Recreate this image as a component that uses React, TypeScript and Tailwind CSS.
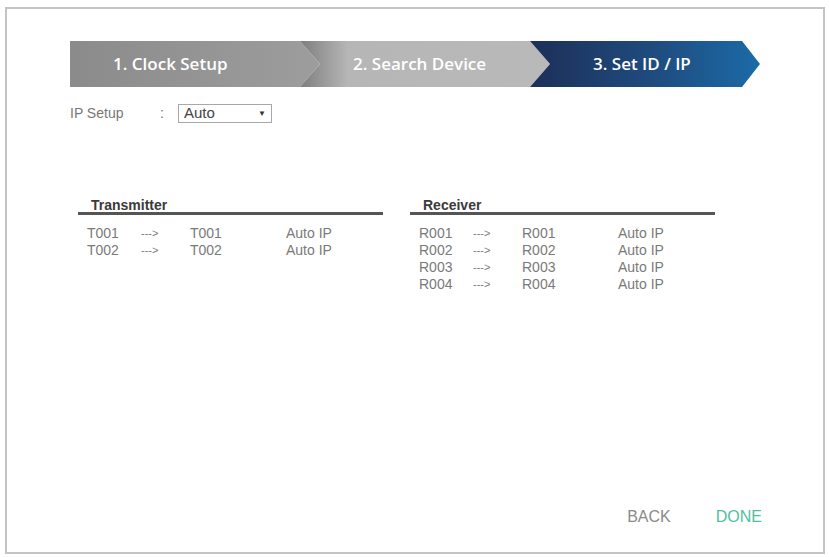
const transmitters = [
  { from: "T001", to: "T001", ip: "Auto IP" },
  { from: "T002", to: "T002", ip: "Auto IP" },
];

const receivers = [
  { from: "R001", to: "R001", ip: "Auto IP" },
  { from: "R002", to: "R002", ip: "Auto IP" },
  { from: "R003", to: "R003", ip: "Auto IP" },
  { from: "R004", to: "R004", ip: "Auto IP" },
];

type Row = { from: string; to: string; ip: string };

function DeviceList({ title, rows }: { title: string; rows: Row[] }) {
  return (
    <div className="w-[305px]">
      <div className="pl-[13px] border-b-[3px] border-[#555] text-[14px] leading-[14px] font-bold text-[#3a3a3a]">
        {title}
      </div>
      <div className="mt-[10px] pl-[9px] text-[14px] leading-[17px] text-[#7a7a7a]">
        {rows.map((r) => (
          <div key={r.from} className="flex">
            <span className="w-[54px]">{r.from}</span>
            <span className="w-[49px] text-[11px]">---&gt;</span>
            <span className="w-[96px]">{r.to}</span>
            <span>{r.ip}</span>
          </div>
        ))}
      </div>
    </div>
  );
}

export default function App() {
  return (
    <div className="pl-[5px] pt-[7px] bg-white font-['Liberation_Sans',Arial,sans-serif]">
      <div className="w-[820px] h-[547px] border-2 border-[#c4c4c4] flex flex-col">
        {/* wizard steps */}
        <div className="flex mt-[32px] ml-[63px] h-[46px] text-white text-[17px] font-semibold font-['Open_Sans',sans-serif]">
          <div className="w-[250px] flex items-center pl-[43px] bg-[linear-gradient(90deg,#8b8b8b,#9d9d9d)] [clip-path:polygon(0_0,230px_0,250px_50%,230px_100%,0_100%)]">
            1. Clock Setup
          </div>
          <div className="w-[250px] -ml-[20px] flex items-center pl-[53px] bg-[linear-gradient(90deg,#7e7e7e_0px,#b6b6b6_48px,#b9b9b9)] [clip-path:polygon(0_0,230px_0,250px_50%,230px_100%,0_100%,20px_50%)]">
            2. Search Device
          </div>
          <div className="w-[230px] -ml-[20px] flex items-center pl-[63px] bg-[linear-gradient(90deg,#1d2f58,#1f4c80_55%,#1b6ba7)] [clip-path:polygon(0_0,212px_0,230px_50%,212px_100%,0_100%,20px_50%)]">
            3. Set ID / IP
          </div>
        </div>

        {/* ip mode */}
        <div className="flex items-center h-[19px] mt-[17px] ml-[63px] text-[14px] text-[#777]">
          <span className="w-[90px]">IP Setup</span>
          <span className="w-[18px]">:</span>
          <div className="w-[94px] h-[19px] border border-[#a8a8a8] flex items-center justify-between pl-[5px] pr-[5px] text-[15px] text-[#444]">
            <span>Auto</span>
            <span className="text-[8px] text-[#333]">▼</span>
          </div>
        </div>

        {/* device tables */}
        <div className="flex gap-[27px] ml-[71px] mt-[75px]">
          <DeviceList title="Transmitter" rows={transmitters} />
          <DeviceList title="Receiver" rows={receivers} />
        </div>

        <div className="mt-auto flex justify-end gap-[45px] pr-[61px] pb-[25px] text-[16px] leading-[20px]">
          <button className="text-[#8a8a8a]">BACK</button>
          <button className="text-[#4fc19e]">DONE</button>
        </div>
      </div>
    </div>
  );
}
